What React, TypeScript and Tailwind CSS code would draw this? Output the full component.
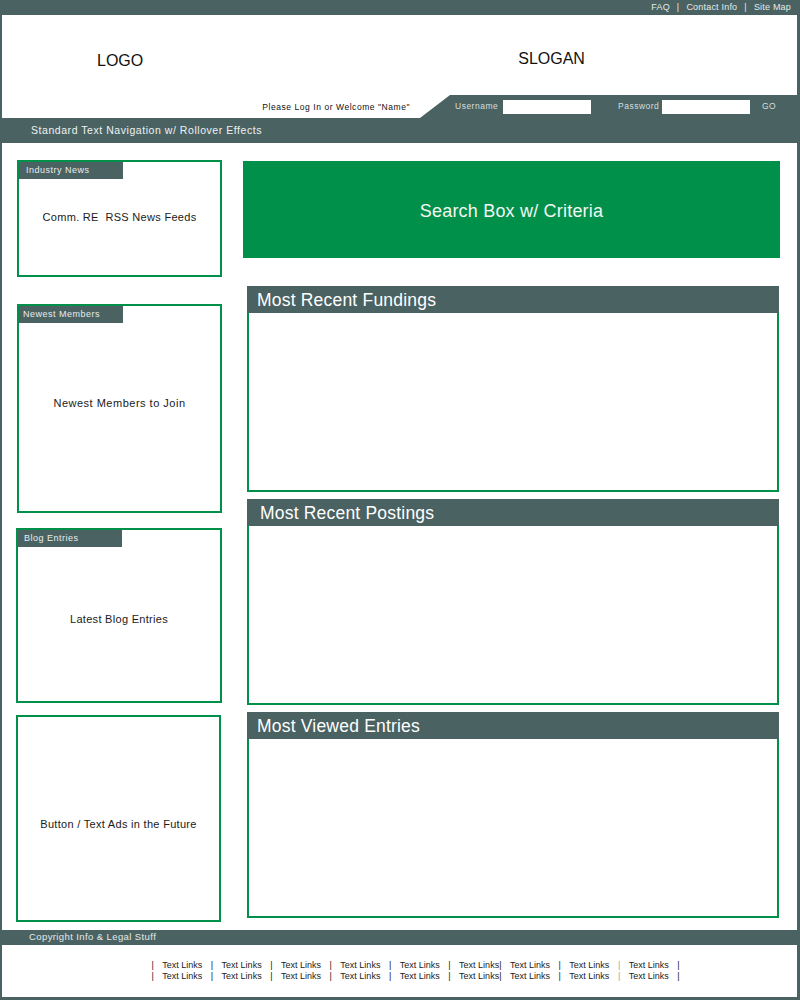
const dark = "bg-[#4a6262]";

function SideBox({
  title,
  text,
  className,
  tabPad,
  textPos,
}: {
  title?: string;
  text: string;
  className: string;
  tabPad?: string;
  textPos?: string;
}) {
  return (
    <div className={`grid border-2 border-[#00904a] ${className}`}>
      {title && (
        <div
          className={`col-start-1 row-start-1 self-start justify-self-start flex h-[17px] w-[104px] items-center ${dark} ${tabPad} text-[9px] tracking-[0.5px] text-[#e8eeee]`}
        >
          {title}
        </div>
      )}
      <div
        className={`col-start-1 row-start-1 self-center justify-self-center text-[11px] tracking-[0.3px] text-[#1a1a1a] ${textPos}`}
      >
        {text}
      </div>
    </div>
  );
}

function Panel({ title, mt, pl }: { title: string; mt: string; pl: string }) {
  return (
    <div className={`ml-[4px] flex h-[206px] w-[532px] flex-col ${mt}`}>
      <div
        className={`flex h-[27px] items-center ${dark} ${pl} pt-[2px] text-[17.5px] tracking-[0.2px] text-white`}
      >
        {title}
      </div>
      <div className="flex-1 border-2 border-t-0 border-[#00904a] bg-white" />
    </div>
  );
}

function LinkRow() {
  const items = Array.from({ length: 9 });
  return (
    <div className="flex items-center justify-center gap-[8.5px] leading-[11px]">
      <span>|</span>
      {items.map((_, i) => (
        <div key={i} className="flex items-center gap-[8.5px]">
          {i === 5 ? (
            <span>Text Links|</span>
          ) : (
            <>
              <span>Text Links</span>
              <span className={i === 7 ? "text-[#9aa5a5]" : ""}>|</span>
            </>
          )}
        </div>
      ))}
    </div>
  );
}

export default function App() {
  return (
    <div
      className={`flex h-[1000px] w-[800px] flex-col ${dark}`}
      style={{ fontFamily: '"Liberation Sans", Arial, sans-serif' }}
    >
      {/* top utility links */}
      <div className="flex h-[15px] items-center justify-end pr-[9px] text-[9px] tracking-[0.2px] text-[#e4eaea]">
        <span>FAQ</span>
        <span className="mx-[7px]">|</span>
        <span>Contact Info</span>
        <span className="mx-[7px]">|</span>
        <span>Site Map</span>
      </div>

      {/* header */}
      <div className="ml-[2px] mr-[3px] flex h-[103px] flex-col bg-white">
        <div className="flex h-[80px] items-center pt-[8px]">
          <div className="ml-[95px] pt-[4px] text-[16px] text-[#111]">LOGO</div>
          <div className="ml-[375px] text-[16px] text-[#111]">SLOGAN</div>
        </div>
        <div className="flex h-[23px]">
          <div className="flex w-[418px] items-center justify-end pr-[10px] pt-[2px] text-[8.5px] tracking-[0.55px] text-[#111]">
            Please Log In or Welcome "Name"
          </div>
          <div
            className={`flex flex-1 items-center ${dark} text-[8.5px] tracking-[0.5px] text-[#d6dede] [clip-path:polygon(30px_0,100%_0,100%_100%,0_100%)]`}
          >
            <span className="ml-[35px] w-[48px]">Username</span>
            <div className="h-[14px] w-[88px] bg-white" />
            <span className="w-[71px] pl-[27px]">Password</span>
            <div className="h-[14px] w-[88px] bg-white" />
            <span className="ml-[12px]">GO</span>
          </div>
        </div>
      </div>

      {/* navigation */}
      <div className="flex h-[25px] items-center pl-[31px] text-[10.5px] tracking-[0.55px] text-[#eef2f2]">
        Standard Text Navigation w/ Rollover Effects
      </div>

      {/* main content */}
      <div className="ml-[2px] mr-[3px] flex h-[787px] bg-white pl-[14px] pt-[17px]">
        <div className="flex w-[206px] flex-col">
          <SideBox
            title="Industry News"
            text="Comm. RE  RSS News Feeds"
            tabPad="pl-[7px]"
            className="ml-[1px] h-[117px] w-[205px] whitespace-pre"
            textPos="mb-[2px]"
          />
          <SideBox
            title="Newest Members"
            text="Newest Members to Join"
            tabPad="pl-[4px]"
            className="ml-[1px] mt-[27px] h-[209px] w-[205px]"
            textPos="mb-[10px] tracking-[0.5px]"
          />
          <SideBox
            title="Blog Entries"
            text="Latest Blog Entries"
            tabPad="pl-[6px]"
            className="mt-[15px] h-[175px] w-[206px]"
            textPos="mt-[8px]"
          />
          <SideBox
            text="Button / Text Ads in the Future"
            className="mt-[12px] h-[207px] w-[205px]"
            textPos="mt-[12px]"
          />
        </div>

        <div className="ml-[21px] flex flex-col">
          <div className="mt-[1px] flex h-[97px] w-[537px] items-center justify-center pt-[3px] bg-[#00904a] text-[18px] tracking-[0.2px] text-[#f2f7f4]">
            Search Box w/ Criteria
          </div>
          <Panel title="Most Recent Fundings" mt="mt-[28px]" pl="pl-[10px]" />
          <Panel title="Most Recent Postings" mt="mt-[7px]" pl="pl-[13px]" />
          <Panel title="Most Viewed Entries" mt="mt-[7px]" pl="pl-[10px]" />
        </div>
      </div>

      {/* footer */}
      <div className="flex h-[15px] items-center pl-[29px] text-[9.5px] tracking-[0.4px] text-[#e4eaea]">
        Copyright Info &amp; Legal Stuff
      </div>
      <div className="ml-[2px] mr-[3px] flex h-[52px] flex-col pl-[32px] pt-[15px] bg-white text-[9px] text-[#222]">
        <LinkRow />
        <LinkRow />
      </div>
    </div>
  );
}
